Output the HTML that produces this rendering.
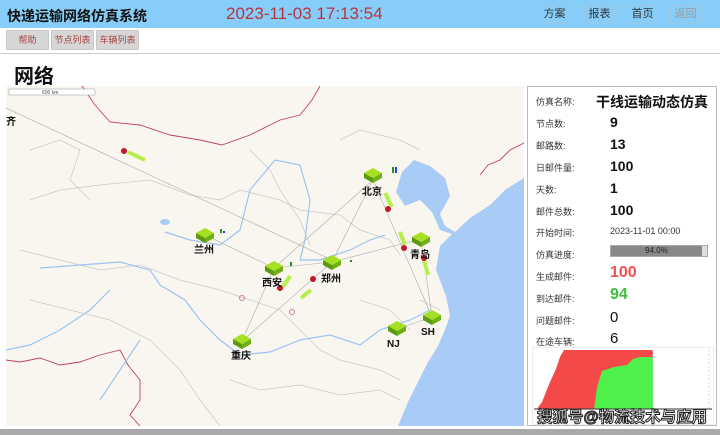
<!DOCTYPE html>
<html><head><meta charset="utf-8">
<style>
*{margin:0;padding:0;box-sizing:border-box}
body{width:720px;height:435px;overflow:hidden;background:#fff;font-family:"Liberation Sans","Noto Sans CJK SC",sans-serif;position:relative}
.hdr{position:absolute;left:0;top:0;width:720px;height:28px;background:#87cdf9}
.title{position:absolute;left:7px;top:6px;font-size:14px;font-weight:bold;color:#111}
.time{position:absolute;left:226px;top:4px;font-size:17px;color:#b8343a}
.nb{position:absolute;top:5px;height:18px;border:1px solid #9ec6e0;font-size:11px;color:#333;text-align:center;line-height:16px;width:31px}
.tb{position:absolute;top:30px;height:20px;width:43px;background:#d6d6d6;border:1px solid #c8c8c8;font-size:9px;color:#a54040;text-align:center;line-height:18px;border-radius:1px}
.hr{position:absolute;left:0;top:53px;width:720px;height:1px;background:#ccc}
.h1{position:absolute;left:14px;top:60px;font-size:20px;font-weight:bold;color:#111}
.map{position:absolute;left:6px;top:86px;width:518px;height:340px}
.panel{position:absolute;left:527px;top:86px;width:190px;height:340px;border:1px solid #bbb;background:#fff}
.l{position:absolute;left:8px;font-size:9px;color:#333}
.v{position:absolute;left:82px;font-weight:bold;color:#111}
.bot{position:absolute;left:0;top:429px;width:720px;height:6px;background:#aaa}
.wm{position:absolute;left:537px;top:405px;font-size:15.5px;font-weight:bold;color:#fff;-webkit-text-stroke:1px #222;white-space:nowrap}
</style></head><body>
<div class="hdr">
<div class="title">快递运输网络仿真系统</div>
<div class="time">2023-11-03 17:13:54</div>
<div class="nb" style="left:539px">方案</div>
<div class="nb" style="left:584px">报表</div>
<div class="nb" style="left:627px">首页</div>
<div class="nb" style="left:670px;color:#999">返回</div>
</div>
<div class="tb" style="left:6px">帮助</div>
<div class="tb" style="left:51px">节点列表</div>
<div class="tb" style="left:96px">车辆列表</div>
<div class="hr"></div>
<div class="h1">网络</div>

<svg class="map" viewBox="6 86 518 340" width="518" height="340">
<rect x="6" y="86" width="518" height="340" fill="#f9f6ef"/>
<path d="M524 178 L505 190 L490 205 L470 218 L455 232 L445 226 L440 214 L450 196 L445 178 L430 166 L414 160 L402 172 L396 192 L405 206 L420 200 L432 212 L440 230 L452 234 L440 246 L436 270 L446 296 L450 316 L444 332 L438 346 L428 362 L418 382 L408 402 L398 426 L524 426 Z" fill="#a8ccf5"/>
<g fill="none" stroke="#c04060" stroke-width="0.9">
<path d="M82 86 L95 105 L110 122 L140 125 L170 135 L200 140 L222 145 L250 135 L280 120 L300 115 L312 100 L320 86"/>
<path d="M524 143 L510 150 L500 160 L488 165 L480 175"/>
<path d="M6 360 L20 362 L40 358 L60 365 L80 362 L100 355 L120 350 L128 365 L140 380 L140 400 L130 415 L140 426"/>
</g>
<g fill="none" stroke="#c8c8c8" stroke-width="0.7">
<path d="M30 200 L60 190 L100 185 L150 180 L190 195 L220 200 L240 190 L280 200 L300 210 L340 215 L360 230 L390 240 L400 255"/>
<path d="M20 250 L60 260 L100 270 L140 265 L180 280 L220 290 L250 300 L280 310 L300 330 L320 350 L340 360 L380 370 L400 380"/>
<path d="M340 140 L360 130 L380 135 L400 140 L420 150"/>
<path d="M30 300 L70 310 L110 320 L150 340 L180 370 L200 400 L220 426"/>
<path d="M250 150 L270 170 L280 190 L300 220 L310 245"/>
<path d="M420 300 L440 310 M360 300 L390 310 L410 330"/>
<path d="M230 380 L260 390 L300 385 L340 395 L380 390 L400 400"/>
<path d="M30 150 L60 140 L80 150 L70 180 L90 200"/>
</g>
<g fill="none" stroke="#9cc4f0" stroke-width="1.2">
<path d="M40 268 L80 265 L120 262 L150 270 L160 285 L185 300 L200 320 L220 340 L240 355 L270 352 L300 340 L330 335 L360 345 L380 330 L410 320 L430 310"/>
<path d="M165 232 L190 240 L220 245 L240 230 L250 190 L275 160 L300 165 L310 200 L305 240 L300 260 L320 260 L350 250 L370 240 L385 235"/>
<path d="M6 350 L30 345 L60 330 L90 310 L110 290"/>
<path d="M100 400 L120 370 L140 340"/>
</g>
<ellipse cx="165" cy="222" rx="5" ry="3" fill="#a8ccf5"/>
<g stroke="#aaa" stroke-width="0.6" fill="none">
<path d="M6 108 L332 260"/><path d="M205 235 L274 268"/><path d="M274 268 L332 262 L421 239"/>
<path d="M373 180 L274 268"/><path d="M373 180 L332 262"/><path d="M373 180 L432 317"/>
<path d="M274 268 L242 341"/><path d="M332 262 L242 341"/><path d="M397 329 L432 317"/><path d="M421 239 L432 317"/>
</g>
<g stroke="#b4f04a" stroke-width="4">
<path d="M128 152 L145 160"/><path d="M385 193 L392 207"/><path d="M400 232 L405 245"/><path d="M424 260 L428 275"/><path d="M290 276 L283 287"/><path d="M311 290 L301 298"/>
</g>
<g fill="#c0182a"><circle cx="124" cy="151" r="3"/><circle cx="388" cy="209" r="3"/><circle cx="404" cy="248" r="3"/><circle cx="424" cy="258" r="3"/><circle cx="280" cy="288" r="3"/><circle cx="313" cy="279" r="3"/></g>
<g fill="none" stroke="#d08080"><circle cx="242" cy="298" r="2.5"/><circle cx="292" cy="312" r="2.5"/></g>
<defs><g id="n"><path d="M-9 -2 L0 -7 L9 -2 L0 3Z" fill="#a6e022"/><path d="M-9 -2 L0 3 L0 8 L-9 3Z" fill="#5c9a10"/><path d="M9 -2 L0 3 L0 8 L9 3Z" fill="#6fb014"/></g></defs>
<use href="#n" x="373" y="175"/><use href="#n" x="421" y="239"/><use href="#n" x="205" y="235"/><use href="#n" x="274" y="268"/><use href="#n" x="332" y="262"/><use href="#n" x="242" y="341"/><use href="#n" x="397" y="328"/><use href="#n" x="432" y="317"/>
<g font-size="10" font-weight="bold" fill="#111" font-family="Liberation Sans,Noto Sans CJK SC,sans-serif">
<text x="362" y="195">北京</text><text x="410" y="258">青岛</text><text x="194" y="253">兰州</text><text x="262" y="286">西安</text><text x="321" y="282">郑州</text><text x="231" y="359">重庆</text><text x="387" y="347">NJ</text><text x="421" y="335">SH</text><text x="6" y="125">齐</text>
</g>
<g><rect x="392" y="167" width="2" height="6" fill="#2a8c2a"/><rect x="395" y="167" width="2" height="6" fill="#2244cc"/><rect x="220" y="229" width="2" height="4" fill="#2a8c2a"/><rect x="223" y="231" width="2" height="2" fill="#2244cc"/><rect x="290" y="262" width="2" height="4" fill="#2a8c2a"/><rect x="350" y="260" width="2" height="2" fill="#2a8c2a"/></g>
<rect x="9" y="89" width="86" height="6" fill="#fff" stroke="#999" stroke-width="0.5"/><text x="42" y="94" font-size="5" fill="#555">600 km</text>
</svg>

<div class="panel">
<div class="l" style="top:8px">仿真名称:</div><div class="v" style="left:68px;top:5px;font-size:14px">干线运输动态仿真</div>
<div class="l" style="top:30px">节点数:</div><div class="v" style="top:27px;font-size:14px">9</div>
<div class="l" style="top:52px">邮路数:</div><div class="v" style="top:49px;font-size:14px">13</div>
<div class="l" style="top:74px">日邮件量:</div><div class="v" style="top:71px;font-size:14px">100</div>
<div class="l" style="top:96px">天数:</div><div class="v" style="top:93px;font-size:14px">1</div>
<div class="l" style="top:118px">邮件总数:</div><div class="v" style="top:115px;font-size:14px">100</div>
<div class="l" style="top:139px">开始时间:</div><div class="v" style="top:139px;font-size:9px;font-weight:normal;color:#333">2023-11-01 00:00</div>
<div class="l" style="top:161px">仿真进度:</div>
<div style="position:absolute;left:82px;top:158px;width:98px;height:12px;border:1px solid #aaa;background:#ddd"><div style="width:91px;height:10px;background:#888;font-size:8px;color:#222;text-align:center;line-height:10px">94.0%</div></div>
<div class="l" style="top:183px">生成邮件:</div><div class="v" style="top:177px;font-size:16px;color:#f05050">100</div>
<div class="l" style="top:205px">到达邮件:</div><div class="v" style="top:199px;font-size:16px;color:#3cc03c">94</div>
<div class="l" style="top:227px">问题邮件:</div><div class="v" style="top:222px;font-size:15px;font-weight:normal">0</div>
<div class="l" style="top:248px">在途车辆:</div><div class="v" style="top:243px;font-size:15px;font-weight:normal">6</div>
<svg style="position:absolute;left:4px;top:260px" width="182" height="78">
<rect x="0.5" y="0.5" width="181" height="77" fill="#fff" stroke="#eee"/>
<path d="M5 62 L10 55 L14 45 L18 35 L24 22 L28 10 L32 3 L121 3 L121 62Z" fill="#f54848"/>
<path d="M62 62 L65 40 L70 24 L82 20 L95 18 L101 12 L108 10 L121 10 L121 62Z" fill="#4ef04a"/>
<line x1="2" y1="62" x2="180" y2="62" stroke="#333"/>
<line x1="121" y1="3" x2="121" y2="62" stroke="#ddd" stroke-dasharray="2,2"/>
<line x1="177" y1="3" x2="177" y2="62" stroke="#ddd" stroke-dasharray="2,2"/>
</svg>
</div>
<div class="wm">搜狐号@物流技术与应用</div>
<div class="bot"></div>
</body></html>
